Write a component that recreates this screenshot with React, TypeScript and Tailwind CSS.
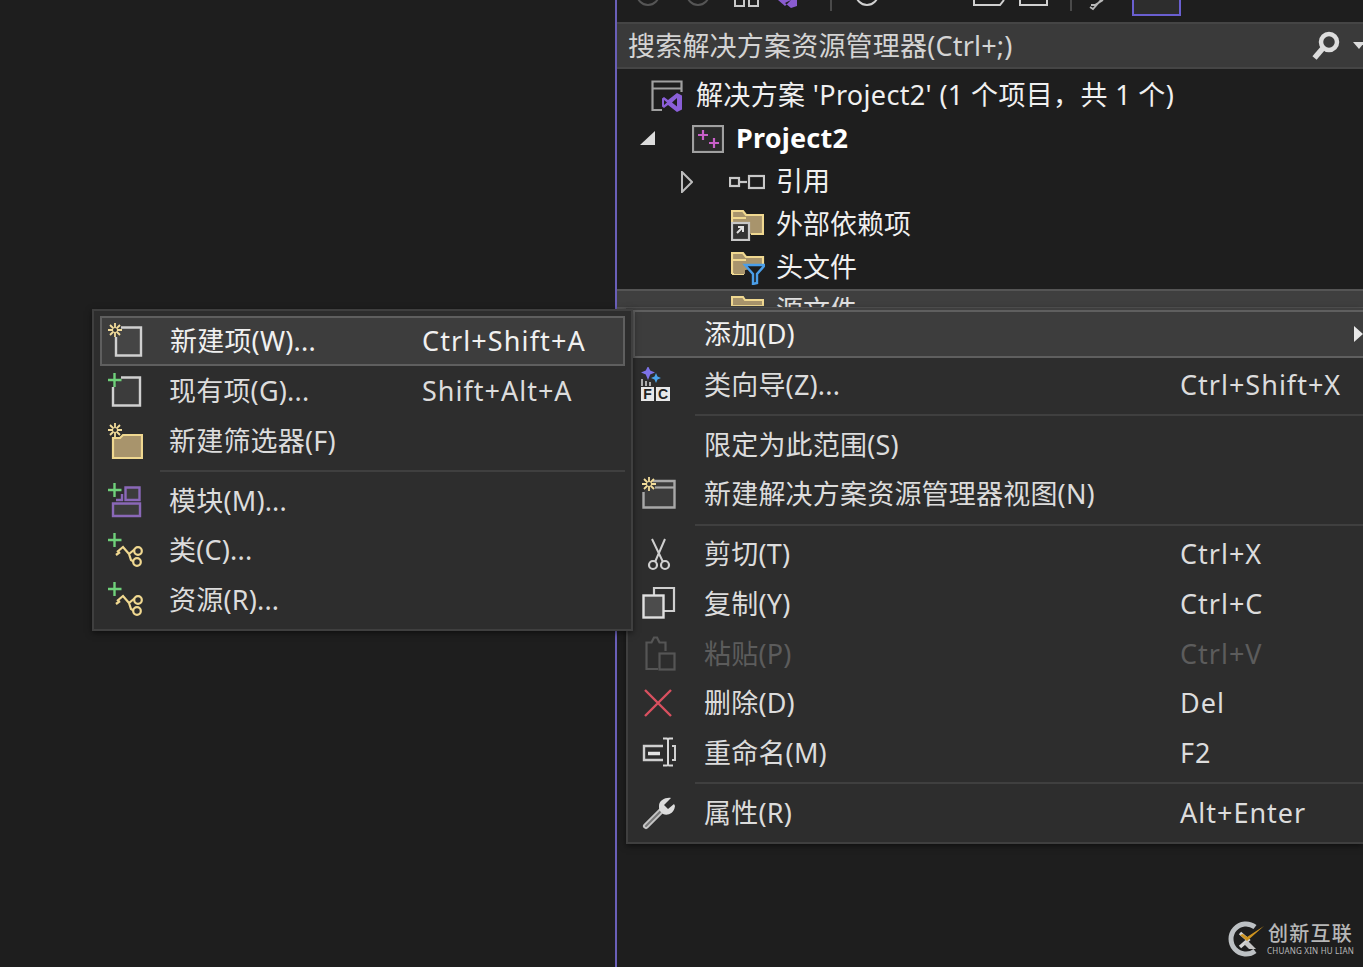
import type { ReactNode } from 'react'

const FONT = "font-['Noto_Sans','Noto_Sans_CJK_SC',sans-serif]"

function Spark({ x = 0, y = 0 }: { x?: number; y?: number }) {
  return (
    <g transform={`translate(${x} ${y})`} stroke="#f2dc9a" strokeWidth="1.8">
      <path d="M7 0v14M0 7h14M2 2l10 10M12 2L2 12" />
      <circle cx="7" cy="7" r="2" fill="#2d2d2d" stroke="none" />
    </g>
  )
}

function Plus({ x = 0, y = 0 }: { x?: number; y?: number }) {
  return <path transform={`translate(${x} ${y})`} d="M6.5 0v14M0 7h13.500" stroke="#6fd07a" strokeWidth="2.400" fill="none" />
}

function Icon({ children, w = 36, h = 36 }: { children: ReactNode; w?: number; h?: number }) {
  return (
    <svg width={w} height={h} viewBox={`0 0 ${w} ${h}`} fill="none" className="shrink-0">
      {children}
    </svg>
  )
}

const NewItemIcon = (
  <Icon>
    <path d="M14 4.500h20v28H9V14" stroke="#d0d0d0" strokeWidth="2.400" fill="#454545" />
    <Spark x={1} y={0} />
  </Icon>
)

const ExistingItemIcon = (
  <Icon>
    <path d="M14 4.500h19v28H6V14" stroke="#d0d0d0" strokeWidth="2.400" fill="#3c3c3c" />
    <Plus x={1} y={0} />
  </Icon>
)

const NewFilterIcon = (
  <Icon>
    <path d="M6 15h7l3-3h19v23H6z" fill="#a8946c" stroke="#f0d890" strokeWidth="2.200" />
    <Spark x={1} y={0} />
  </Icon>
)

const ModuleIcon = (
  <Icon>
    <path d="M18.500 4.500h14v12.500h-14zM6 20.500h27v12.500H6z" stroke="#8a68b8" strokeWidth="2.400" fill="#3c3c3c" />
    <path d="M9 17h6v-6" stroke="#8a68b8" strokeWidth="2.400" />
    <Plus x={1} y={0} />
  </Icon>
)

const ClassIcon = (
  <Icon>
    <path d="M10 19l6-5 6 7 6-5M22 21l2 6 5 3" stroke="#f0d890" strokeWidth="2.200" />
    <path d="M9 22l4-3" stroke="#f0d890" strokeWidth="2.200" />
    <circle cx="31" cy="18" r="3.800" stroke="#f0d890" strokeWidth="2.200" fill="#2d2d2d" />
    <circle cx="30" cy="29" r="3.800" stroke="#f0d890" strokeWidth="2.200" fill="#2d2d2d" />
    <Plus x={1} y={0} />
  </Icon>
)

const WizardIcon = (
  <Icon>
    <path d="M8 -1l2.200 4.500L15 5.500l-4.800 2L8 13 5.800 7.500 1 5.500l4.800-2z" fill="#7d73e8" />
    <path d="M16 6l1.500 3.500L21 11l-3.500 1.500L16 16l-1.500-3.500L11 11l3.500-1.500z" fill="#4aa3ea" />
    <path d="M2 12v7M6 14v5M10 15v4" stroke="#d8d8d8" strokeWidth="1.500" />
    <rect x="1" y="20" width="13" height="14" fill="#e8e8e8" />
    <rect x="16" y="20" width="14" height="14" fill="#e8e8e8" />
    <text x="7.500" y="32" textAnchor="middle" fontSize="14" fontWeight="700" fill="#222" fontFamily="Liberation Sans">F</text>
    <text x="23" y="32" textAnchor="middle" fontSize="14" fontWeight="700" fill="#222" fontFamily="Liberation Sans">C</text>
  </Icon>
)

const SolutionViewIcon = (
  <Icon>
    <path d="M13 4h21.500v26.500H3.500V15" stroke="#a8a8a8" strokeWidth="2.400" fill="#3c3c3c" />
    <path d="M15 10.500h19" stroke="#a8a8a8" strokeWidth="2.200" />
    <Spark x={2} y={0} />
  </Icon>
)

const CutIcon = (
  <Icon>
    <path d="M12 2l11 23M25 2L15 25" stroke="#cfcfcf" strokeWidth="2" />
    <circle cx="13" cy="28" r="4" stroke="#cfcfcf" strokeWidth="2.200" />
    <circle cx="25" cy="28" r="4" stroke="#cfcfcf" strokeWidth="2.200" />
  </Icon>
)

const CopyIcon = (
  <Icon>
    <path d="M14 9V2h20v23h-10" stroke="#cfcfcf" strokeWidth="2.200" />
    <rect x="3.500" y="9.500" width="20" height="22" stroke="#e0e0e0" strokeWidth="2.400" fill="#4c4c4c" />
  </Icon>
)

const PasteIcon = (
  <Icon>
    <path d="M18 33H6.500V6.500h5l2.500-5h3l2.500 5h6V15" stroke="#555" strokeWidth="2.200" />
    <rect x="19.500" y="17.500" width="15" height="16" stroke="#555" strokeWidth="2.200" />
  </Icon>
)

const DeleteIcon = (
  <Icon>
    <path d="M5 4l26 26M31 4L5 30" stroke="#d9505f" strokeWidth="2.400" />
  </Icon>
)

const RenameIcon = (
  <Icon>
    <path d="M23 11H4v14h19" stroke="#cfcfcf" strokeWidth="2.400" />
    <path d="M8 18.500h12" stroke="#e4e4e4" strokeWidth="3.500" />
    <path d="M28 4v26M23 3.500h4l1 1 1-1h4M23 30.500h4l1-1 1 1h4" stroke="#d8d8d8" strokeWidth="2" />
    <path d="M32 11h3v14h-3" stroke="#cfcfcf" strokeWidth="2" />
  </Icon>
)

const WrenchIcon = (
  <Icon>
    <path d="M6 31l15-15" stroke="#c4c4c4" strokeWidth="6" strokeLinecap="round" />
    <path d="M6 31l15-15" stroke="#777" strokeWidth="2" strokeLinecap="round" />
    <path d="M31 3c-5-1-12 2-12 8 0 2 0 3 1 5l3 3c4 2 11 0 12-8l-1-2-6 5-4-4 6-6z" fill="#dcdcdc" />
  </Icon>
)

type RowData = {
  label: string
  shortcut?: string
  icon?: ReactNode
  disabled?: boolean
}

function MenuRow({ label, shortcut, icon, disabled, textX, iconX }: RowData & { textX: string; iconX: string }) {
  return (
    <div className={`flex items-center h-[49.700px] ${disabled ? 'text-[#5c5c5c]' : 'text-[#dcdcdc]'}`}>
      <div className={`${iconX} flex items-center shrink-0`}>{icon}</div>
      <span className={`${textX} whitespace-nowrap tracking-[0.2px]`}>{label}</span>
      {shortcut && <span className="whitespace-nowrap tracking-[1px]">{shortcut}</span>}
    </div>
  )
}

function Sep({ left }: { left: string }) {
  return (
    <div className={`h-[10.300px] flex items-center ${left}`}>
      <div className="h-[2px] w-full bg-[#3f3f3f]" />
    </div>
  )
}

const subItems: RowData[] = [
  { label: '现有项(G)...', shortcut: 'Shift+Alt+A', icon: ExistingItemIcon },
  { label: '新建筛选器(F)', icon: NewFilterIcon },
]

const subItems2: RowData[] = [
  { label: '模块(M)...', icon: ModuleIcon },
  { label: '类(C)...', icon: ClassIcon },
  { label: '资源(R)...', icon: ClassIcon },
]

function AddSubmenu() {
  const rowProps = { textX: 'w-[253px]', iconX: 'w-[69px] pl-[7px]' }
  return (
    <div className="absolute left-[92px] top-[309px] w-[541px] h-[322px] bg-[#2d2d2d] border-2 border-[#3f3f3f] px-[6px] pt-[6px] shadow-[0_2px_6px_rgba(0,0,0,0.5)]">
      <div className="flex items-center h-[50px] -mt-[1px] mb-[0.500px] bg-[#3d3d3d] border-2 border-[#5f5f5f] text-[#f0f0f0]">
        <div className="w-[68px] pl-[5px] flex items-center shrink-0">{NewItemIcon}</div>
        <span className="w-[252px] whitespace-nowrap tracking-[0.2px]">新建项(W)...</span>
        <span className="whitespace-nowrap tracking-[1.100px]">Ctrl+Shift+A</span>
      </div>
      {subItems.map((r) => (
        <MenuRow key={r.label} {...r} {...rowProps} />
      ))}
      <Sep left="pl-[60px]" />
      {subItems2.map((r) => (
        <MenuRow key={r.label} {...r} {...rowProps} />
      ))}
    </div>
  )
}

function ContextMenu() {
  const rowProps = { textX: 'w-[476px]', iconX: 'w-[71px] pl-[7px]' }
  return (
    <div className="absolute left-[626px] top-[308px] w-[737px] h-[536px] bg-[#2d2d2d] border-2 border-r-0 border-[#3f3f3f] pl-[5px] shadow-[0_2px_6px_rgba(0,0,0,0.5)]">
      <div className="flex items-center h-[48px] mb-[2px] bg-[#3d3d3d] border-y-2 border-l-2 border-[#5f5f5f] text-[#f0f0f0] pl-[69px]">
        <span className="flex-1 tracking-[0.2px]">添加(D)</span>
        <svg width="9" height="16" viewBox="0 0 9 16" className="shrink-0">
          <path d="M0 0l9 8-9 8z" fill="#e8e8e8" />
        </svg>
      </div>
      <MenuRow label="类向导(Z)..." shortcut="Ctrl+Shift+X" icon={WizardIcon} {...rowProps} />
      <Sep left="pl-[62px]" />
      <MenuRow label="限定为此范围(S)" {...rowProps} />
      <MenuRow label="新建解决方案资源管理器视图(N)" icon={SolutionViewIcon} {...rowProps} />
      <Sep left="pl-[62px]" />
      <MenuRow label="剪切(T)" shortcut="Ctrl+X" icon={CutIcon} {...rowProps} />
      <MenuRow label="复制(Y)" shortcut="Ctrl+C" icon={CopyIcon} {...rowProps} />
      <MenuRow label="粘贴(P)" shortcut="Ctrl+V" icon={PasteIcon} disabled {...rowProps} />
      <MenuRow label="删除(D)" shortcut="Del" icon={DeleteIcon} {...rowProps} />
      <MenuRow label="重命名(M)" shortcut="F2" icon={RenameIcon} {...rowProps} />
      <Sep left="pl-[62px]" />
      <MenuRow label="属性(R)" shortcut="Alt+Enter" icon={WrenchIcon} {...rowProps} />
    </div>
  )
}

function Toolbar() {
  return (
    <div className="h-[22px] flex items-end overflow-hidden shrink-0 relative pl-[1px]">
      <svg width="746" height="22" viewBox="0 0 746 22" fill="none" className="shrink-0">
        <circle cx="30" cy="-6" r="11" stroke="#555" strokeWidth="2" />
        <circle cx="80" cy="-6" r="11" stroke="#555" strokeWidth="2" />
        <path d="M117 0v6h9V0M131 0v6h9V0" stroke="#c8c8c8" strokeWidth="2" />
        <path d="M160 0l7 6 6-6M173 0l6 0v6l-6 2-6-5-6 3z" fill="#8a5cd0" />
        <path d="M213 0v11" stroke="#4a4a4a" strokeWidth="2" />
        <circle cx="249" cy="-6" r="11" stroke="#d0d0d0" strokeWidth="2" />
        <path d="M356 0v5h26l4-5M402 0v5h4v-1M406 4v1h23V0" stroke="#d0d0d0" strokeWidth="2" />
        <path d="M453 0v11" stroke="#4a4a4a" strokeWidth="2" />
        <path d="M473 5l4 0 8-5M472 7l3 2 8-9" stroke="#b8b8b8" strokeWidth="1.800" />
      </svg>
      <div className="absolute left-[515px] top-[-4px] w-[49px] h-[20px] border-2 border-[#6a5fd0] bg-[#2d2d2d]" />
    </div>
  )
}

function SearchBar() {
  return (
    <div className="h-[47px] bg-[#3a3a3a] border-y-2 border-[#454545] flex items-center pl-[11px] shrink-0 text-[#d4d4d4]">
      <span className="flex-1 whitespace-nowrap tracking-[0.2px] mt-[1px]">搜索解决方案资源管理器(Ctrl+;)</span>
      <svg width="30" height="30" viewBox="0 0 30 30" fill="none" className="shrink-0 mr-[12px]">
        <circle cx="18" cy="11" r="8" stroke="#dcdcdc" strokeWidth="4.500" />
        <path d="M12.500 16.500L3.500 27" stroke="#dcdcdc" strokeWidth="5.500" />
      </svg>
      <svg width="12" height="8" viewBox="0 0 12 8" className="shrink-0 -mr-[1px]">
        <path d="M0 0h12L6 7z" fill="#dcdcdc" />
      </svg>
    </div>
  )
}

function TreeRow({ indent, icon, children, arrow }: { indent: string; icon: ReactNode; children: ReactNode; arrow?: ReactNode }) {
  return (
    <div className={`h-[43px] flex items-center ${indent} text-[#f0f0f0] relative`}>
      {arrow}
      {icon}
      {children}
    </div>
  )
}

function SolutionTree() {
  return (
    <div className="pt-[5px]">
      <TreeRow
        indent="pl-[33px] gap-[12px]"
        icon={
          <svg width="34" height="34" viewBox="0 0 34 34" fill="none" className="shrink-0">
            <path d="M12 31H2.500V2.500h29V13M3 9.500h28" stroke="#a0a0a0" strokeWidth="2.200" />
            <path d="M27 14l5 2.500v14L27 33l-9-7-4 3-2-1.500v-8l2-1.500 4 3zM17 23.500l-3-2.500v5zM27 19l-5 4.500 5 4z" fill="#8a5fd8" />
          </svg>
        }
      >
        <span className="whitespace-nowrap tracking-[0.35px]">解决方案 'Project2' (1 个项目，共 1 个)</span>
      </TreeRow>
      <TreeRow
        indent="pl-[75px] gap-[12px]"
        arrow={
          <svg width="16" height="16" viewBox="0 0 16 16" className="absolute left-[23px] top-[13px]">
            <path d="M15 1v14H0z" fill="#dcdcdc" />
          </svg>
        }
        icon={
          <svg width="32" height="28" viewBox="0 0 32 28" fill="none" className="shrink-0">
            <rect x="1" y="1" width="30" height="26" stroke="#a0a0a0" strokeWidth="2.200" fill="#2a2a2a" />
            <path d="M11 5v10M6 10h10M22 13v10M17 18h10" stroke="#c85fc8" strokeWidth="2.200" />
          </svg>
        }
      >
        <span className="font-bold text-white whitespace-nowrap tracking-[0.2px]">Project2</span>
      </TreeRow>
      <TreeRow
        indent="pl-[112px] gap-[11px]"
        arrow={
          <svg width="12" height="22" viewBox="0 0 12 22" fill="none" className="absolute left-[64px] top-[11px]">
            <path d="M1 1l10 10L1 21z" stroke="#bcbcbc" strokeWidth="2" />
          </svg>
        }
        icon={
          <svg width="36" height="16" viewBox="0 0 36 16" fill="none" className="shrink-0">
            <rect x="1" y="4" width="9" height="8" stroke="#c8c8c8" strokeWidth="2.200" />
            <path d="M10 8h8" stroke="#c8c8c8" strokeWidth="2.200" />
            <rect x="20" y="2" width="15" height="12" stroke="#c8c8c8" strokeWidth="2.200" />
          </svg>
        }
      >
        <span>引用</span>
      </TreeRow>
      <TreeRow
        indent="pl-[114px] gap-[12px]"
        icon={
          <svg width="33" height="32" viewBox="0 0 33 32" fill="none" className="shrink-0">
            <path d="M1 23V2h11l3 4h17v19H20" fill="#a8946c" stroke="#f0d890" strokeWidth="2.200" />
            <path d="M1 9h14" stroke="#f0d890" strokeWidth="2" />
            <rect x="1" y="14" width="17" height="17" fill="#333" stroke="#c8c8c8" strokeWidth="2.200" />
            <path d="M6 24l6-6M7 18h5v5" stroke="#e0e0e0" strokeWidth="2" />
          </svg>
        }
      >
        <span>外部依赖项</span>
      </TreeRow>
      <TreeRow
        indent="pl-[114px] gap-[11px]"
        icon={
          <svg width="34" height="34" viewBox="0 0 34 34" fill="none" className="shrink-0">
            <path d="M1 23V2h11l3 4h17v8M1 23h12" fill="#a8946c" stroke="#f0d890" strokeWidth="2.200" />
            <path d="M1 9h14" stroke="#f0d890" strokeWidth="2" />
            <path d="M3 10h27v4H14v9H3z" fill="#a8946c" />
            <path d="M14 14h20l-8 9v9l-4 1V23z" fill="#1e1e1e" stroke="#4a9ee8" strokeWidth="2.400" />
          </svg>
        }
      >
        <span>头文件</span>
      </TreeRow>
      {/* selected row, mostly hidden by the menus */}
      <div className="h-[20px] bg-[#3f3f3f] border-y-2 border-[#555] overflow-hidden flex items-start pl-[114px] gap-[12px] text-[#e0e0e0]">
        <svg width="33" height="10" viewBox="0 0 33 10" className="shrink-0 mt-[5px]">
          <path d="M1 10V1h11l2 3h18v6z" fill="#a8946c" stroke="#f0d890" strokeWidth="2" />
        </svg>
        <span className="leading-[34px] mt-[2px]">源文件</span>
      </div>
    </div>
  )
}

function Watermark() {
  return (
    <div className="absolute right-[9px] bottom-[10px] flex items-center gap-[3px] opacity-90">
      <svg width="36" height="36" viewBox="0 0 36 36" fill="none" className="shrink-0">
        <path d="M27 6A15 15 0 1 0 27 30" stroke="#cfd3d6" strokeWidth="5" />
        <path d="M12 12l8 7-8 7" stroke="#e8e8e8" strokeWidth="3.500" />
        <path d="M36 5L19 16l-4-3-3 1 7 6z" fill="#e0a020" />
        <path d="M20 20l8 8h-7l-5-5z" fill="#d8d8d8" />
      </svg>
      <div className="flex flex-col items-center text-[#c8c8c8]">
        <span className="text-[20px] leading-[24px] font-medium tracking-[1.300px]">创新互联</span>
        <span className="text-[8px] leading-[10px] whitespace-nowrap tracking-[0.2px]">CHUANG XIN HU LIAN</span>
      </div>
    </div>
  )
}

export default function App() {
  return (
    <div className={`${FONT} relative w-[1363px] h-[967px] overflow-hidden bg-[#1e1e1e] text-[27px] flex`}>
      <div className="w-[615px] shrink-0" />
      <div className="flex-1 border-l-2 border-[#6a5fb8] flex flex-col">
        <Toolbar />
        <SearchBar />
        <SolutionTree />
      </div>
      <ContextMenu />
      <AddSubmenu />
      <Watermark />
    </div>
  )
}
